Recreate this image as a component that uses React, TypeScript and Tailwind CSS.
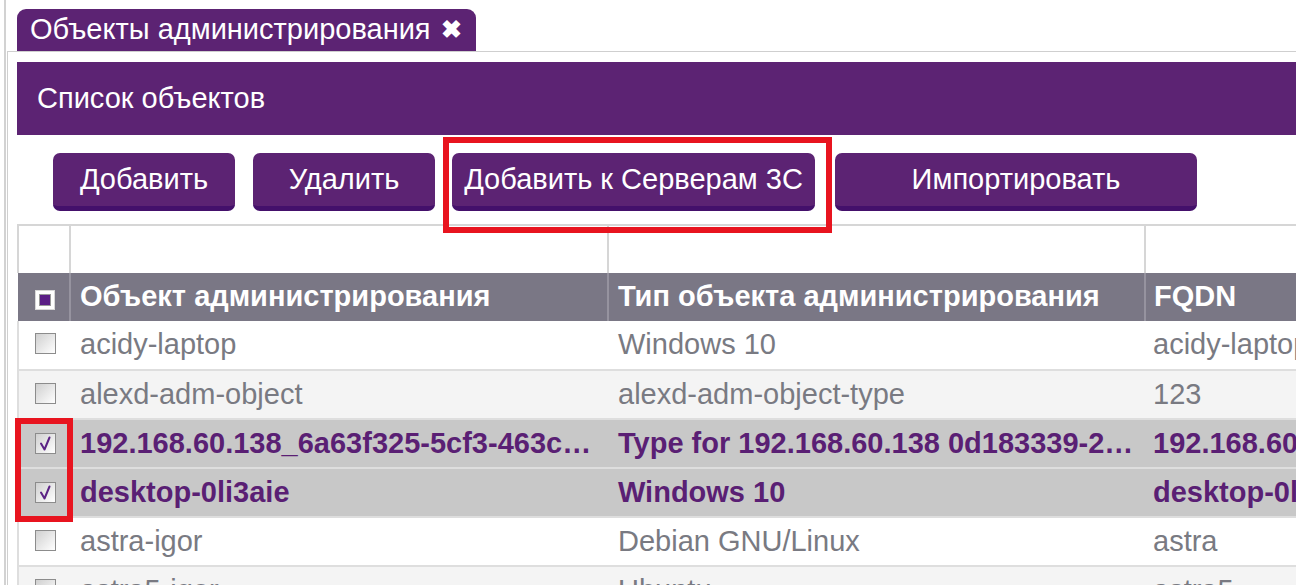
import { ReactNode } from 'react'

type Row = {
  name: string
  type: string
  fqdn: string
  checked?: boolean
  shade?: boolean
}

const rows: Row[] = [
  { name: 'acidy-laptop', type: 'Windows 10', fqdn: 'acidy-laptop.local' },
  { name: 'alexd-adm-object', type: 'alexd-adm-object-type', fqdn: '123', shade: true },
  {
    name: '192.168.60.138_6a63f325-5cf3-463c-8d1e-2b7f90a4c611',
    type: 'Type for 192.168.60.138 0d183339-2f4a-4c1b-9e07-5a8d3b6c2e10',
    fqdn: '192.168.60.138',
    checked: true,
  },
  { name: 'desktop-0li3aie', type: 'Windows 10', fqdn: 'desktop-0li3aie', checked: true },
  { name: 'astra-igor', type: 'Debian GNU/Linux', fqdn: 'astra' },
  { name: 'astra5-igor', type: 'Ubuntu', fqdn: 'astra5', shade: true },
]

function CheckBox({ checked }: { checked?: boolean }) {
  return (
    <span className="inline-flex h-[21px] w-[21px] items-center justify-center border border-[#8c8c8c] bg-gradient-to-br from-[#d0d0d0] to-[#ffffff]">
      {checked ? (
        <svg viewBox="0 0 19 19" className="h-[19px] w-[19px]">
          <path d="M5 9.5 L8.5 15.5 L13.5 3.5" fill="none" stroke="#5b2285" strokeWidth="2" strokeLinecap="round" strokeLinejoin="round" />
        </svg>
      ) : null}
    </span>
  )
}

function HeadCheckBox() {
  return (
    <span className="inline-flex h-[20px] w-[20px] items-center justify-center border border-[#d8d8d8] bg-white p-[3px]">
      <span className="h-full w-full border border-[#9a9a9a] bg-[#5b1f86]" />
    </span>
  )
}

function ActionButton({ children, width }: { children: ReactNode; width: string }) {
  return (
    <button
      className={`${width} h-[58px] rounded-[7px] border-b-[5px] border-[#44106b] bg-[#5c2373] text-[29px] text-white`}
    >
      {children}
    </button>
  )
}

export default function App() {
  return (
    <div className="h-[585px] overflow-hidden bg-white font-['Liberation_Sans',Arial,sans-serif]">
      <div className="ml-[4px] h-full border-l-2 border-[#d2d2d2]">
        {/* вкладка */}
        <div className="pl-[11px] pt-[9px]">
          <div className="inline-flex h-[42px] items-center gap-[10px] rounded-t-[9px] bg-[#5c2373] pl-[13px] pr-[14px] text-[29px] text-white">
            <span>Объекты администрирования</span>
            <span className="text-[25px] font-bold">✖</span>
          </div>
        </div>

        <div className="ml-px h-full border-l border-t border-[#cfcfcf] pl-[9px] pt-[10px]">
          <div className="flex h-[73px] items-center bg-[#5c2373] pl-[20px] text-[29px] text-white">
            Список объектов
          </div>

          {/* панель кнопок */}
          <div className="relative z-10 flex items-start pl-[36px] pt-[18px]">
            <ActionButton width="w-[182px]">Добавить</ActionButton>
            <div className="ml-[18px]">
              <ActionButton width="w-[182px]">Удалить</ActionButton>
            </div>
            <div className="relative ml-[17px]">
              <ActionButton width="w-[363px]">Добавить к Серверам 3С</ActionButton>
              <div className="absolute -left-[9px] -right-[17px] -top-[16px] -bottom-[22px] border-[6px] border-[#e8141f]" />
            </div>
            <div className="ml-[20px]">
              <ActionButton width="w-[362px]">Импортировать</ActionButton>
            </div>
          </div>

          {/* таблица объектов */}
          <div className="relative mt-[13px] w-[1500px]">
            <table className="w-full table-fixed border-collapse text-[29px]">
              <colgroup>
                <col className="w-[52px]" />
                <col className="w-[538px]" />
                <col className="w-[537px]" />
                <col />
              </colgroup>
              <thead>
                <tr className="h-[48px] border-l-2 border-t-2 border-[#d6d6d6] bg-white">
                  <th className="border-r-2 border-[#d6d6d6]" />
                  <th className="border-r-2 border-[#d6d6d6]" />
                  <th className="border-r-2 border-[#d6d6d6]" />
                  <th />
                </tr>
                <tr className="h-[48px] bg-[#7a7785] text-left font-bold text-white">
                  <th className="border-r-2 border-[#96939f] pl-[17px] align-middle">
                    <HeadCheckBox />
                  </th>
                  <th className="border-r-2 border-[#96939f] pl-[9px]">Объект администрирования</th>
                  <th className="border-r-2 border-[#96939f] pl-[9px]">Тип объекта администрирования</th>
                  <th className="pl-[8px]">FQDN</th>
                </tr>
              </thead>
              <tbody>
                {rows.map((r) => (
                  <tr
                    key={r.name}
                    className={`h-[49px] border-b-2 border-l-2 border-[#dedede] ${
                      r.checked
                        ? 'bg-[#c8c8c8] font-bold text-[#5a1f74]'
                        : r.shade
                          ? 'bg-[#f4f4f4] text-[#797a82]'
                          : 'bg-white text-[#797a82]'
                    }`}
                  >
                    <td className="pl-[16px] align-middle">
                      <CheckBox checked={r.checked} />
                    </td>
                    <td className="truncate pl-[10px] pr-[14px]">{r.name}</td>
                    <td className="truncate pl-[10px] pr-[8px]">{r.type}</td>
                    <td className="truncate pl-[8px]">{r.fqdn}</td>
                  </tr>
                ))}
              </tbody>
            </table>
            {/* рамка вокруг отмеченных строк */}
            <div className="absolute left-[-2px] top-[194px] h-[104px] w-[58px] border-[6px] border-[#e8141f]" />
          </div>
        </div>
      </div>
    </div>
  )
}
